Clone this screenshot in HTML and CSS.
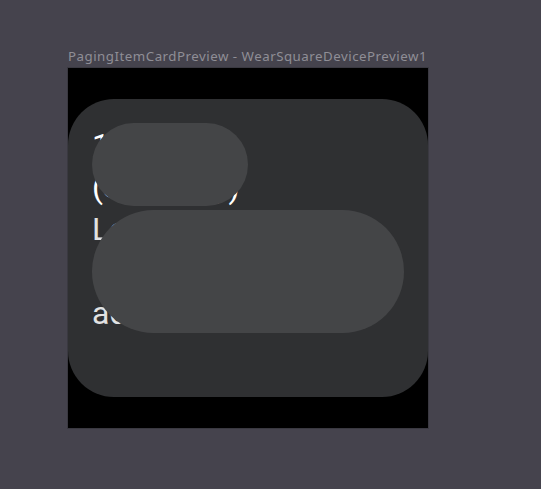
FILE: index.html
```html
<!DOCTYPE html>
<html lang="en">
<head>
  <meta charset="UTF-8" />
  <meta name="viewport" content="width=device-width, initial-scale=1.0"/>
  <title>PagingItemCardPreview</title>
  <link rel="stylesheet" href="styles.css">
</head>
<body>
  <div class="preview">
    <div class="preview-label">PagingItemCardPreview - WearSquareDevicePreview1</div>
    <div class="device">
      <div class="card">
        <div class="card-text">
          <div class="line">10:30</div>
          <div class="line">(Saturday)</div>
          <div class="line">Lorem</div>
          <div class="line">ipsum dolor</div>
          <div class="line">adipiscing</div>
        </div>
        <!-- shimmer placeholders drawn over the text -->
        <div class="placeholder placeholder-title"></div>
        <div class="placeholder placeholder-body"></div>
      </div>
    </div>
  </div>
</body>
</html>
```

FILE: styles.css
```css
body {
  margin: 0;
  background: #45434d;
  font-family: "Noto Sans", "DejaVu Sans", sans-serif;
}

.preview {
  padding: 46px 0 0 67px;
}

.preview-label {
  color: #8f8e96;
  font-size: 13.3px;
  letter-spacing: 0.5px;
  line-height: 20px;
  height: 21px;
  padding-left: 1px;
  white-space: nowrap;
}

.device {
  width: 360px;
  height: 329px;
  background: #000;
  border: 1px solid #3a3941;
  padding-top: 31px;
}

.card {
  position: relative;
  height: 298px;
  background: #2f3032;
  border-radius: 46px;
  overflow: hidden;
}

.card-text {
  padding: 25px 24px 0 24px;
  font-family: Roboto, "Noto Sans", sans-serif;
  font-size: 32px;
  line-height: 42px;
  color: #fff;
}

.line:nth-child(n+3) {
  color: #e2e2e2;
}

.placeholder {
  position: absolute;
  left: 24px;
  background: #444547;
}

.placeholder-title {
  top: 24px;
  width: 156px;
  height: 83px;
  border-radius: 42px;
}

.placeholder-body {
  top: 111px;
  width: 312px;
  height: 123px;
  border-radius: 62px;
}
```
